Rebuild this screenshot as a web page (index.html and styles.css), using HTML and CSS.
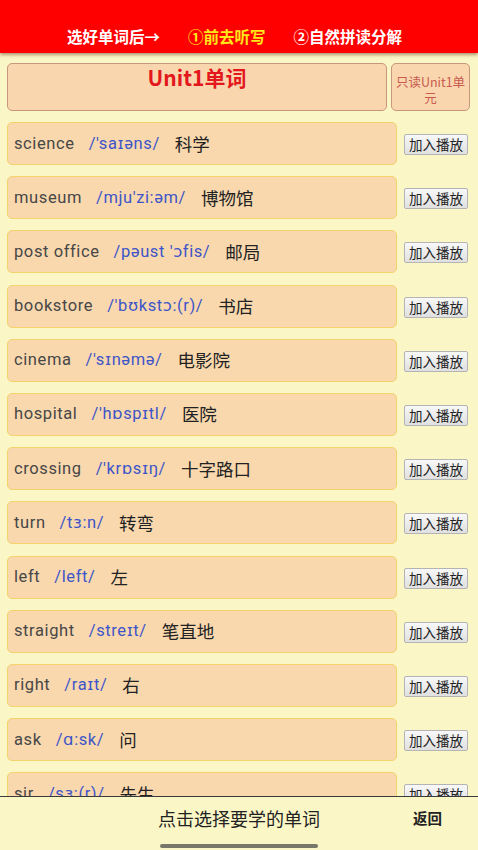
FILE: index.html
```html
<!DOCTYPE html>
<html lang="zh">
<head>
<meta charset="utf-8">
<title>Unit1单词</title>
<link rel="stylesheet" href="styles.css">
</head>
<body>
<header class="topbar">
  <span class="tb-item">选好单词后→</span>
  <span class="tb-item tb-hl">①前去听写</span>
  <span class="tb-item">②自然拼读分解</span>
</header>
<main class="content">
  <div class="title-row">
    <div class="title-box">Unit1单词</div>
    <div class="side-box">只读Unit1单元</div>
  </div>
  <ul class="list">
    <li class="row"><div class="card"><span class="en">science</span><span class="ph">/'saɪəns/</span><span class="cn">科学</span></div><button class="btn">加入播放</button></li>
    <li class="row"><div class="card"><span class="en">museum</span><span class="ph">/mju'zi:əm/</span><span class="cn">博物馆</span></div><button class="btn">加入播放</button></li>
    <li class="row"><div class="card"><span class="en">post office</span><span class="ph">/pəust 'ɔfis/</span><span class="cn">邮局</span></div><button class="btn">加入播放</button></li>
    <li class="row"><div class="card"><span class="en">bookstore</span><span class="ph">/'bʊkstɔ:(r)/</span><span class="cn">书店</span></div><button class="btn">加入播放</button></li>
    <li class="row"><div class="card"><span class="en">cinema</span><span class="ph">/'sɪnəmə/</span><span class="cn">电影院</span></div><button class="btn">加入播放</button></li>
    <li class="row"><div class="card"><span class="en">hospital</span><span class="ph">/'hɒspɪtl/</span><span class="cn">医院</span></div><button class="btn">加入播放</button></li>
    <li class="row"><div class="card"><span class="en">crossing</span><span class="ph">/'krɒsɪŋ/</span><span class="cn">十字路口</span></div><button class="btn">加入播放</button></li>
    <li class="row"><div class="card"><span class="en">turn</span><span class="ph">/tɜ:n/</span><span class="cn">转弯</span></div><button class="btn">加入播放</button></li>
    <li class="row"><div class="card"><span class="en">left</span><span class="ph">/left/</span><span class="cn">左</span></div><button class="btn">加入播放</button></li>
    <li class="row"><div class="card"><span class="en">straight</span><span class="ph">/streɪt/</span><span class="cn">笔直地</span></div><button class="btn">加入播放</button></li>
    <li class="row"><div class="card"><span class="en">right</span><span class="ph">/raɪt/</span><span class="cn">右</span></div><button class="btn">加入播放</button></li>
    <li class="row"><div class="card"><span class="en">ask</span><span class="ph">/ɑ:sk/</span><span class="cn">问</span></div><button class="btn">加入播放</button></li>
    <li class="row"><div class="card"><span class="en">sir</span><span class="ph">/sɜ:(r)/</span><span class="cn">先生</span></div><button class="btn">加入播放</button></li>
  </ul>
</main>
<footer class="bottombar">
  <span class="bb-text">点击选择要学的单词</span>
  <span class="bb-back">返回</span>
  <span class="home-ind"></span>
</footer>
</body>
</html>
```
FILE: styles.css
```css
* { box-sizing: border-box; }
html, body { margin: 0; padding: 0; }
body {
  background: #fbf6c6;
  font-family: Roboto, "Noto Sans CJK SC", sans-serif;
  width: 478px;
  overflow: hidden;
}
.topbar {
  height: 53px;
  background: #ff0000;
  display: flex;
  align-items: flex-end;
  padding: 0 0 6px 67px;
  box-shadow: 0 2px 3px rgba(90, 40, 20, 0.45);
  position: relative;
  z-index: 2;
}
.tb-item {
  color: #ffffff;
  font-family: "Noto Sans CJK SC", sans-serif;
  font-size: 15.5px;
  font-weight: 700;
  line-height: 22px;
  margin-right: 28px;
}
.tb-hl { color: #ffe81a; }
.content { padding: 10px 8px 0 7px; }
.title-row { display: flex; gap: 4px; height: 48px; }
.title-box {
  flex: 0 0 380px;
  background: #fad6ae;
  border: 1px solid #c9957c;
  border-radius: 5px;
  color: #e3181c;
  font-family: "Noto Sans CJK SC", sans-serif;
  font-size: 21px;
  font-weight: 700;
  text-align: center;
  line-height: 26px;
  padding-top: 0;
}
.side-box {
  flex: 0 0 79px;
  background: #fad6ae;
  border: 1px solid #c9957c;
  border-radius: 5px;
  color: #c85a50;
  font-family: "Noto Sans CJK SC", sans-serif;
  font-size: 12.5px;
  text-align: center;
  line-height: 16px;
  padding: 10px 1px 0;
}
.list {
  list-style: none;
  margin: 11px 0 0;
  padding: 0;
  display: flex;
  flex-direction: column;
  gap: 11.2px;
}
.row { display: flex; align-items: center; height: 43px; }
.card {
  flex: 0 0 390px;
  height: 43px;
  background: #f9d8ae;
  border: 1px solid #f4d36a;
  border-radius: 5px;
  display: flex;
  align-items: center;
  padding-left: 6px;
  padding-bottom: 1px;
  white-space: nowrap;
}
.en {
  color: #474747;
  font-size: 16.5px;
  letter-spacing: 0.6px;
  margin-right: 14px;
}
.ph {
  color: #3d55c8;
  font-family: Roboto, "DejaVu Sans", sans-serif;
  font-size: 16.5px;
  letter-spacing: 0.6px;
  margin-right: 15px;
}
.cn {
  color: #222222;
  font-family: "Noto Sans CJK SC", sans-serif;
  font-size: 17.5px;
}
.btn {
  margin-left: 7px;
  width: 64px;
  height: 21px;
  padding: 0;
  font-family: "Noto Sans CJK SC", sans-serif;
  font-size: 13.5px;
  line-height: 19px;
  color: #222;
  background: linear-gradient(#f8f8f8, #e0e0e0);
  border: 1px solid #b4b4b4;
  border-radius: 2px;
  position: relative;
  top: 1px;
}
.bottombar {
  position: fixed;
  left: 0;
  bottom: 0;
  width: 478px;
  height: 54px;
  background: #fbf6c6;
  border-top: 1px solid #3a3a3a;
  display: flex;
  align-items: flex-start;
  justify-content: center;
  padding-top: 10px;
  z-index: 3;
}
.bb-text {
  font-family: "Noto Sans CJK SC", sans-serif;
  font-size: 18px;
  color: #222;
  line-height: 22px;
}
.bb-back {
  position: absolute;
  left: 413px;
  top: 12px;
  font-family: "Noto Sans CJK SC", sans-serif;
  font-size: 14.5px;
  font-weight: 700;
  color: #222;
  line-height: 18px;
}
.home-ind {
  position: absolute;
  left: 160px;
  bottom: 2px;
  width: 158px;
  height: 4px;
  border-radius: 2px;
  background: #77776a;
}
```
